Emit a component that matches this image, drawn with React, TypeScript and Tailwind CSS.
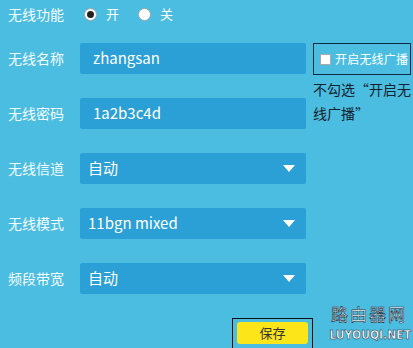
const font = { fontFamily: '"Noto Sans CJK SC", "Noto Sans", sans-serif' };

const Label = ({ text }: { text: string }) => (
  <div className="w-[80px] shrink-0 pl-[8px] text-[14px] text-[#f4fbff]">{text}</div>
);

const Field = ({ value, select }: { value: string; select?: boolean }) => (
  <div className="flex h-[31px] w-[226px] items-center justify-between rounded-[2px] bg-[#2ba0d6] pr-[11px] text-[15px] text-white">
    <span className={select ? "pl-[8px]" : "pl-[13px]"}>{value}</span>
    {select && (
      <span className="h-0 w-0 border-x-[6px] border-t-[7px] border-x-transparent border-t-white" />
    )}
  </div>
);

const Radio = ({ checked, label }: { checked?: boolean; label: string }) => (
  <div className="flex items-center gap-[9px]">
    <span className="flex size-[13px] items-center justify-center rounded-full border border-[#9aa] bg-white">
      {checked && <span className="size-[7px] rounded-full bg-[#222]" />}
    </span>
    <span className="text-[13px] text-white">{label}</span>
  </div>
);

export default function App() {
  return (
    <div className="relative h-[348px] w-[413px] overflow-hidden bg-[#4bbde1]" style={font}>
      <div className="flex h-[28px] items-center">
        <Label text="无线功能" />
        <div className="flex gap-[19px] pl-[4px]">
          <Radio checked label="开" />
          <Radio label="关" />
        </div>
      </div>

      <div className="flex">
        <div className="flex w-[313px] shrink-0 flex-col gap-[24px] pt-[15px]">
          <div className="flex items-center">
            <Label text="无线名称" />
            <Field value="zhangsan" />
          </div>
          <div className="flex items-center">
            <Label text="无线密码" />
            <Field value="1a2b3c4d" />
          </div>
          <div className="flex items-center">
            <Label text="无线信道" />
            <Field value="自动" select />
          </div>
          <div className="flex items-center">
            <Label text="无线模式" />
            <Field value="11bgn mixed" select />
          </div>
          <div className="flex items-center">
            <Label text="频段带宽" />
            <Field value="自动" select />
          </div>
        </div>
        <div className="flex w-[98px] flex-col pt-[15px]">
          <div className="flex h-[32px] items-center gap-[4px] overflow-hidden border border-[#102a40] pl-[6px]">
            <span className="size-[11px] shrink-0 border border-[#aaa] bg-white" />
            <span className="whitespace-nowrap text-[12px] tracking-[0.2px] text-white">开启无线广播</span>
          </div>
          <div className="mt-[2px] text-[14px] leading-[24px] text-[#16222c]">
            不勾选“开启无线广播”
          </div>
        </div>
      </div>

      <div className="mt-[24px] ml-[232px] flex h-[31px] w-[81px] items-start justify-center border border-[#111] pt-[3px]">
        <div className="flex h-[22px] w-[71px] items-center justify-center rounded-[3px] bg-[#fce61a] text-[13px] text-[#333]">
          保存
        </div>
      </div>

      {/* watermark */}
      <div className="absolute top-[304px] right-[6px] text-[17px] leading-[20px] tracking-[2px] text-white [-webkit-text-stroke:0.6px_#1b2a3a]">
        路由器网
      </div>
      <div
        className="absolute top-[328px] right-[2px] text-[12px] leading-[14px] font-bold text-white [-webkit-text-stroke:0.5px_#1b2a3a]"
        style={{ fontFamily: '"DejaVu Sans Condensed", "DejaVu Sans", sans-serif' }}
      >
        LUYOUQI.NET
      </div>
    </div>
  );
}
